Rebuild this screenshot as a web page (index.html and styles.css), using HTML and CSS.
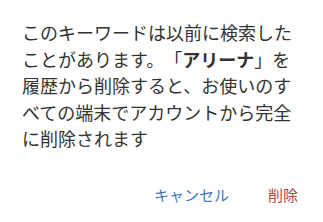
FILE: index.html
```html
<!DOCTYPE html>
<html lang="ja">
<head>
    <meta charset="UTF-8">
    <meta name="viewport" content="width=device-width, initial-scale=1.0">
    <title>検索履歴から削除</title>
    <link rel="stylesheet" href="styles.css">
</head>
<body>
    <div class="dialog">
        <p class="dialog-message">このキーワードは以前に検索したことがあります。「<strong>アリーナ</strong>」を履歴から削除すると、お使いのすべての端末でアカウントから完全に削除されます</p>
        <div class="dialog-actions">
            <button class="dialog-btn cancel-btn">キャンセル</button>
            <button class="dialog-btn delete-btn">削除</button>
        </div>
    </div>
</body>
</html>
```

FILE: styles.css
```css
body {
    margin: 0;
    background: #ffffff;
    font-family: "Noto Sans CJK JP", "Noto Sans", sans-serif;
}
.dialog {
    width: 323px;
    height: 222px;
    box-sizing: border-box;
    padding: 19px 22px 0 22px;
    background: #ffffff;
}
.dialog-message {
    margin: 0;
    font-size: 18px;
    line-height: 26.5px;
    color: #333333;
    text-spacing-trim: space-all;
    line-break: strict;
}
.dialog-message strong {
    font-weight: bold;
}
.dialog-actions {
    display: flex;
    justify-content: flex-end;
    gap: 39px;
    margin-top: 32px;
    margin-right: 3px;
}
.dialog-btn {
    background: none;
    border: none;
    padding: 0;
    font-family: inherit;
    font-size: 15px;
    line-height: 22px;
    cursor: pointer;
}
.cancel-btn {
    color: #3f76c4;
}
.delete-btn {
    color: #b3463c;
}
```
